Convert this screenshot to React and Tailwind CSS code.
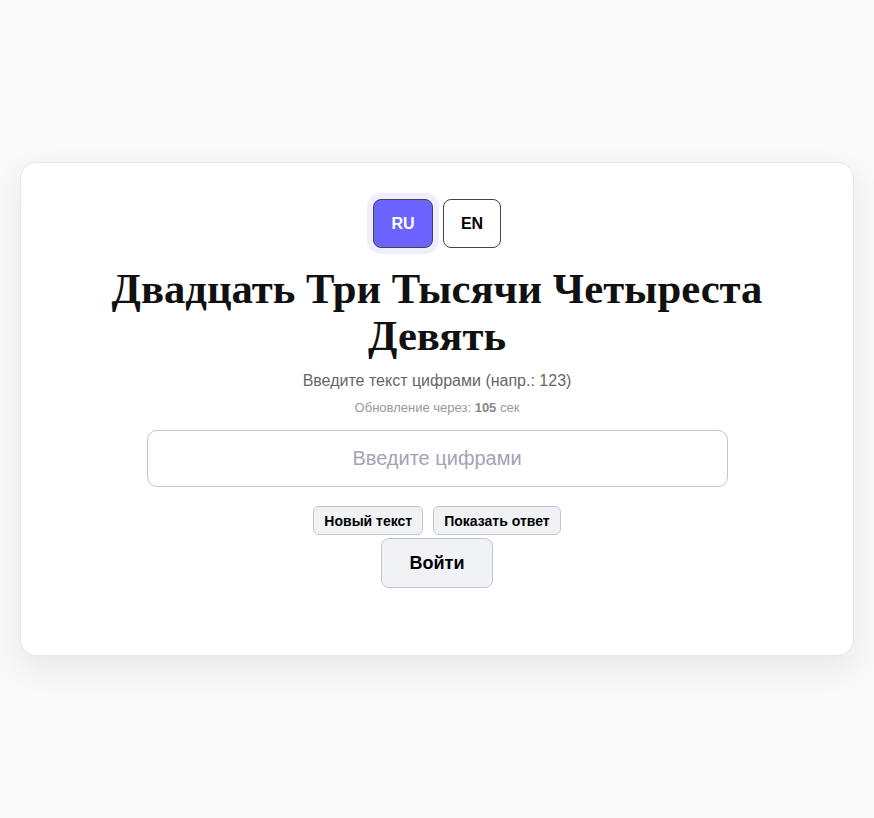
import { useState } from "react"

function App() {
    const [lang, setLang] = useState('ru')
    const [value, setValue] = useState('')

    return (
        <div className="min-h-screen bg-[#f9f9f9] flex items-center justify-center px-5 font-['Liberation_Sans',Arial,sans-serif]">
            <div className="w-full h-[494px] bg-white border border-[#e6e6e6] rounded-2xl shadow-[0_12px_32px_rgba(0,0,0,0.07)] flex flex-col items-center pt-[36px]">
                <div className="flex gap-[10px]">
                    <button
                        onClick={() => setLang('ru')}
                        className={lang === 'ru'
                            ? "w-[60px] h-[49px] rounded-lg border border-[#444] bg-[#6c63ff] text-white font-bold text-base shadow-[0_0_0_6px_#efeefe]"
                            : "w-[60px] h-[49px] rounded-lg border border-[#444] bg-white text-black font-bold text-base"}
                    >
                        RU
                    </button>
                    <button
                        onClick={() => setLang('en')}
                        className={lang === 'en'
                            ? "w-[58px] h-[49px] rounded-lg border border-[#444] bg-[#6c63ff] text-white font-bold text-base shadow-[0_0_0_6px_#efeefe]"
                            : "w-[58px] h-[49px] rounded-lg border border-[#444] bg-white text-black font-bold text-base"}
                    >
                        EN
                    </button>
                </div>
                <h1 className="mt-[17px] text-center font-['Liberation_Serif','Times_New_Roman',serif] font-bold text-[42.7px] leading-[47px] text-[#111] max-w-[700px]">
                    Двадцать Три Тысячи Четыреста Девять
                </h1>
                <p className="mt-[10px] text-base leading-6 text-[#666]">Введите текст цифрами (напр.: 123)</p>
                <p className="mt-[6px] text-[13px] leading-[18px] text-[#999]">
                    Обновление через: <b className="text-[#888]">105</b> сек
                </p>
                <input
                    value={value}
                    onChange={(e) => setValue(e.target.value)}
                    placeholder="Введите цифрами"
                    className="mt-[13px] w-[581px] h-[57px] rounded-[10px] border border-[#c4c4d0] text-center text-xl text-[#333] placeholder:text-[#a3a3b3] outline-none"
                />
                <div className="mt-[19px] flex gap-[10px]">
                    <button className="h-[29px] px-[10px] rounded-md border border-[#c4c4cc] bg-[#f1f2f6] text-sm font-bold text-black">Новый текст</button>
                    <button className="h-[29px] px-[10px] rounded-md border border-[#c4c4cc] bg-[#f1f2f6] text-sm font-bold text-black">Показать ответ</button>
                </div>
                <button className="mt-[3px] w-[112px] h-[50px] rounded-lg border border-[#c4c4cc] bg-[#f1f2f6] text-lg font-bold text-black">Войти</button>
            </div>
        </div>
    )
}

export default App
